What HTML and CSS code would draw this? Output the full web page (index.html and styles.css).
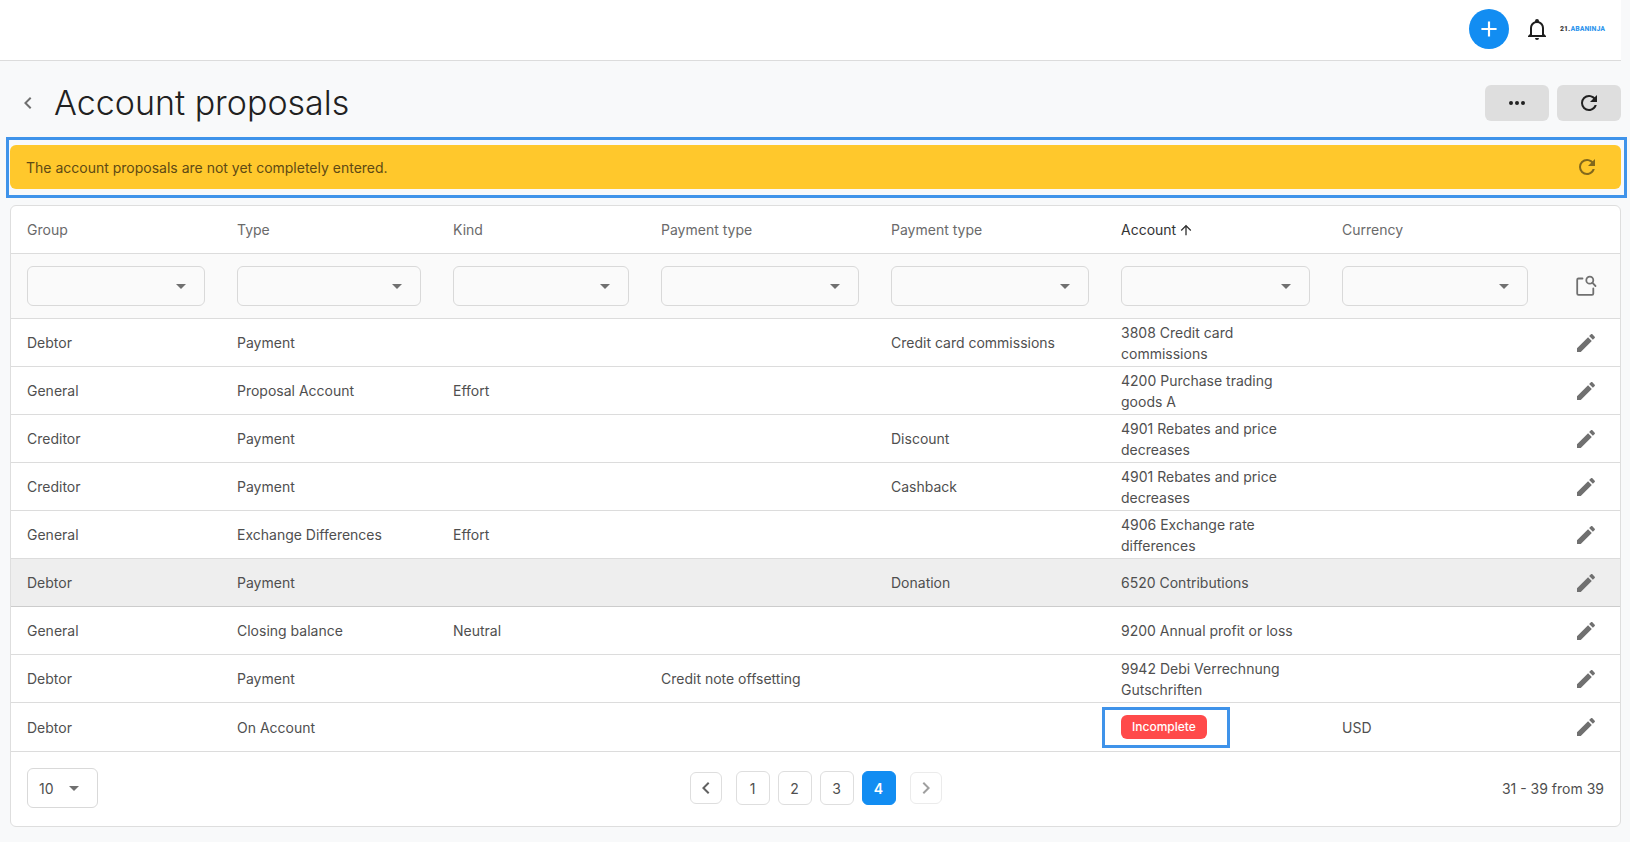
FILE: index.html
```html
<!DOCTYPE html>
<html lang="en">
<head>
<meta charset="utf-8">
<title>Account proposals</title>
<link rel="stylesheet" href="styles.css">
</head>
<body>
<svg class="sprite" aria-hidden="true">
  <symbol id="pencil" viewBox="0 0 24 24"><path d="M20.71,7.04C21.1,6.65 21.1,6 20.71,5.63L18.37,3.29C18,2.9 17.35,2.9 16.96,3.29L15.12,5.12L18.87,8.87M3,17.25V21H6.75L17.81,9.93L14.06,6.18L3,17.25Z"/></symbol>
  <symbol id="refresh" viewBox="0 0 24 24"><path d="M17.65,6.35C16.2,4.9 14.21,4 12,4A8,8 0 0,0 4,12A8,8 0 0,0 12,20C15.73,20 18.84,17.45 19.73,14H17.65C16.83,16.33 14.61,18 12,18A6,6 0 0,1 6,12A6,6 0 0,1 12,6C13.66,6 15.14,6.69 16.22,7.78L13,11H20V4L17.65,6.35Z"/></symbol>
  <symbol id="chevron-left" viewBox="0 0 24 24"><path d="M15.41,16.58L10.83,12L15.41,7.41L14,6L8,12L14,18L15.41,16.58Z"/></symbol>
  <symbol id="chevron-right" viewBox="0 0 24 24"><path d="M8.59,16.58L13.17,12L8.59,7.41L10,6L16,12L10,18L8.59,16.58Z"/></symbol>
</svg>

<header class="topbar">
  <button class="add" type="button" aria-label="Add"><svg viewBox="0 0 24 24"><path d="M19,13H13V19H11V13H5V11H11V5H13V11H19V13Z"/></svg></button>
  <button class="bell" type="button" aria-label="Notifications"><svg viewBox="0 0 24 24"><path d="M10,21H14A2,2 0 0,1 12,23A2,2 0 0,1 10,21M21,19V20H3V19L5,17V11C5,7.9 7.03,5.17 10,4.29C10,4.19 10,4.1 10,4A2,2 0 0,1 12,2A2,2 0 0,1 14,4C14,4.1 14,4.19 14,4.29C16.97,5.17 19,7.9 19,11V17L21,19M17,11A5,5 0 0,0 12,6A5,5 0 0,0 7,11V18H17V11Z"/></svg></button>
  <a class="logo" href="#"><span class="logo-mark">21.</span>ABANINJA</a>
</header>

<main class="page">
  <div class="title-row">
    <button class="back" type="button" aria-label="Back"><svg class="icon"><use href="#chevron-left"/></svg></button>
    <h1>Account proposals</h1>
    <button class="action" type="button" aria-label="More"><svg class="icon" viewBox="0 0 24 24"><path d="M16,12A2,2 0 0,1 18,10A2,2 0 0,1 20,12A2,2 0 0,1 18,14A2,2 0 0,1 16,12M10,12A2,2 0 0,1 12,10A2,2 0 0,1 14,12A2,2 0 0,1 12,14A2,2 0 0,1 10,12M4,12A2,2 0 0,1 6,10A2,2 0 0,1 8,12A2,2 0 0,1 6,14A2,2 0 0,1 4,12Z"/></svg></button>
    <button class="action" type="button" aria-label="Refresh"><svg class="icon"><use href="#refresh"/></svg></button>
  </div>

  <div class="banner">
    <span>The account proposals are not yet completely entered.</span>
    <button class="banner-refresh" type="button" aria-label="Refresh"><svg class="icon"><use href="#refresh"/></svg></button>
  </div>

  <section class="card">
    <table>
      <colgroup><col class="c-group"><col class="c-type"><col class="c-kind"><col class="c-pay"><col class="c-pay"><col class="c-account"><col class="c-currency"><col class="c-edit"></colgroup>
      <thead>
        <tr class="heads">
          <th scope="col">Group</th><th scope="col">Type</th><th scope="col">Kind</th><th scope="col">Payment type</th><th scope="col">Payment type</th>
          <th scope="col" class="sorted" aria-sort="ascending"><span class="sort">Account<svg viewBox="0 0 24 24"><path d="M13,20H11V8L5.5,13.5L4.08,12.08L12,4.16L19.92,12.08L18.5,13.5L13,8V20Z"/></svg></span></th>
          <th scope="col">Currency</th><td></td>
        </tr>
        <tr class="filters">
          <td><div class="select"><select aria-label="Group"><option></option></select></div></td>
          <td><div class="select"><select aria-label="Type"><option></option></select></div></td>
          <td><div class="select"><select aria-label="Kind"><option></option></select></div></td>
          <td><div class="select"><select aria-label="Payment type"><option></option></select></div></td>
          <td><div class="select"><select aria-label="Payment type"><option></option></select></div></td>
          <td><div class="select"><select aria-label="Account"><option></option></select></div></td>
          <td><div class="select"><select aria-label="Currency"><option></option></select></div></td>
          <td class="tools"><button type="button" aria-label="Search"><svg viewBox="0 0 24 24" class="outline"><path d="M8.500 4.500H4.500A1.300 1.300 0 0 0 3.200 5.800V19.500A1.300 1.300 0 0 0 4.500 20.800H18A1.300 1.300 0 0 0 19.300 19.500V14.500"/><circle cx="15.800" cy="6.200" r="3.500"/><path d="M18.300 8.700L21.500 12"/></svg></button></td>
        </tr>
      </thead>
      <tbody>
        <tr><td>Debtor</td><td>Payment</td><td></td><td></td><td>Credit card commissions</td><td>3808 Credit card commissions</td><td></td><td class="tools"><button type="button" aria-label="Edit"><svg><use href="#pencil"/></svg></button></td></tr>
        <tr><td>General</td><td>Proposal Account</td><td>Effort</td><td></td><td></td><td>4200 Purchase trading goods A</td><td></td><td class="tools"><button type="button" aria-label="Edit"><svg><use href="#pencil"/></svg></button></td></tr>
        <tr><td>Creditor</td><td>Payment</td><td></td><td></td><td>Discount</td><td>4901 Rebates and price decreases</td><td></td><td class="tools"><button type="button" aria-label="Edit"><svg><use href="#pencil"/></svg></button></td></tr>
        <tr><td>Creditor</td><td>Payment</td><td></td><td></td><td>Cashback</td><td>4901 Rebates and price decreases</td><td></td><td class="tools"><button type="button" aria-label="Edit"><svg><use href="#pencil"/></svg></button></td></tr>
        <tr><td>General</td><td>Exchange Differences</td><td>Effort</td><td></td><td></td><td>4906 Exchange rate differences</td><td></td><td class="tools"><button type="button" aria-label="Edit"><svg><use href="#pencil"/></svg></button></td></tr>
        <tr class="active"><td>Debtor</td><td>Payment</td><td></td><td></td><td>Donation</td><td>6520 Contributions</td><td></td><td class="tools"><button type="button" aria-label="Edit"><svg><use href="#pencil"/></svg></button></td></tr>
        <tr><td>General</td><td>Closing balance</td><td>Neutral</td><td></td><td></td><td>9200 Annual profit or loss</td><td></td><td class="tools"><button type="button" aria-label="Edit"><svg><use href="#pencil"/></svg></button></td></tr>
        <tr><td>Debtor</td><td>Payment</td><td></td><td>Credit note offsetting</td><td></td><td>9942 Debi Verrechnung Gutschriften</td><td></td><td class="tools"><button type="button" aria-label="Edit"><svg><use href="#pencil"/></svg></button></td></tr>
        <tr class="last"><td>Debtor</td><td>On Account</td><td></td><td></td><td></td><td><span class="badge">Incomplete</span></td><td>USD</td><td class="tools"><button type="button" aria-label="Edit"><svg><use href="#pencil"/></svg></button></td></tr>
      </tbody>
    </table>
    <footer class="foot">
      <div class="select page-size"><select aria-label="Rows per page"><option>10</option></select></div>
      <nav class="pager" aria-label="Pages">
        <button class="step" type="button" aria-label="Previous page"><svg class="icon"><use href="#chevron-left"/></svg></button>
        <div class="numbers">
          <button type="button">1</button><button type="button">2</button><button type="button">3</button><button class="current" type="button" aria-current="page">4</button>
        </div>
        <button class="step" type="button" aria-label="Next page" disabled><svg class="icon"><use href="#chevron-right"/></svg></button>
      </nav>
      <span class="range">31 - 39 from 39</span>
    </footer>
  </section>
</main>
</body>
</html>
```
FILE: styles.css
```css
* { box-sizing: border-box; }

body {
  margin: 0;
  background: #f8f9fa;
  color: #4f4f4f;
  font: 400 14px/21px Inter, "Liberation Sans", sans-serif;
}

button, select { font: inherit; color: inherit; margin: 0; padding: 0; }

button {
  display: flex;
  align-items: center;
  justify-content: center;
  border: 0;
  background: none;
  cursor: pointer;
}

svg { display: block; fill: currentColor; }
.sprite { position: absolute; width: 0; height: 0; }
.icon { width: 24px; height: 24px; }

/* Top bar */
.topbar {
  display: flex;
  align-items: center;
  justify-content: flex-end;
  gap: 16px;
  margin-right: 9px;
  padding: 9px 16px 11px;
  background: #fff;
  border-bottom: 1px solid #dcdcdc;
}
.add { width: 40px; height: 40px; border-radius: 50%; background: #128df2; color: #fff; }
.add svg { width: 26px; height: 26px; }
.bell { width: 24px; height: 24px; color: #1e1e1e; }
.bell svg { width: 24px; height: 24px; }
.logo {
  color: #2f96ee;
  font: 700 8px/12px "Liberation Sans Narrow", "Roboto Condensed", "Open Sans Condensed", Roboto, sans-serif;
  text-decoration: none;
  display: flex;
  justify-content: flex-end;
  width: 40px;
}
.logo-mark { color: #333; }

/* Page */
.page { padding: 0 9px 14px 10px; }

.title-row { display: flex; align-items: center; gap: 8px; padding: 24px 0; }
h1 { flex: 1; margin: 0; color: #212121; font-size: 34px; line-height: 36px; font-weight: 300; }
.back { width: 36px; height: 36px; color: #707070; }
.action { width: 64px; height: 36px; border-radius: 6px; background: #dedede; color: #212121; }

.banner {
  position: relative;
  display: flex;
  align-items: center;
  justify-content: space-between;
  margin-bottom: 16px;
  padding: 10px 22px 10px 16px;
  border-radius: 6px;
  background: #ffc82c;
  color: #5e4a14;
}
.banner-refresh { color: #82681c; }
.banner::after {
  content: "";
  position: absolute;
  inset: -8px -6px -9px -4px;
  border: 3px solid #3f93ea;
  pointer-events: none;
}

/* Table card */
.card { background: #fff; border: 1px solid #dedede; border-radius: 6px; overflow: hidden; }

table { width: 100%; table-layout: fixed; border-collapse: separate; border-spacing: 0; }
.c-group { width: 210px; }
.c-type { width: 216px; }
.c-kind { width: 208px; }
.c-pay { width: 230px; }
.c-account { width: 221px; }
.c-currency { width: 218px; }
.c-edit { width: 76px; }

th, td {
  height: 48px;
  padding: 2px 16px;
  border-bottom: 1px solid #dcdcdc;
  text-align: left;
  vertical-align: middle;
  font-weight: 400;
}
th { color: #6a6a6a; }
.sorted { color: #333; }
.sort { display: flex; align-items: center; gap: 2px; }
.sort svg { width: 16px; height: 16px; }

.filters td { height: 65px; background: #fafafa; }
.select { position: relative; }
.select::after {
  content: "";
  position: absolute;
  top: 18px;
  right: 19px;
  border: 5px solid transparent;
  border-top-color: #707070;
  border-bottom-width: 0;
  pointer-events: none;
}
.select select {
  display: block;
  width: 100%;
  height: 40px;
  padding: 0 11px;
  border: 1px solid #d9d9d9;
  border-radius: 6px;
  background: transparent;
  appearance: none;
}

.active td { background: #eee; border-bottom-color: #ccc; }
.last td { height: 49px; }

.tools { padding: 0 22px 0 30px; color: #707070; }
.tools button, .tools svg { width: 24px; height: 24px; }
.outline { fill: none; stroke: currentColor; stroke-width: 1.8; stroke-linecap: round; }

.badge {
  position: relative;
  display: inline-block;
  padding: 0 11px;
  border-radius: 6px;
  background: #ff4a4a;
  color: #fff;
  font-size: 12px;
  line-height: 24px;
  font-weight: 500;
}
.badge::after {
  content: "";
  position: absolute;
  inset: -8px -23px -9px -19px;
  border: 3px solid #3f93ea;
  pointer-events: none;
}

/* Footer */
.foot {
  display: grid;
  grid-template-columns: 1fr auto 1fr;
  align-items: center;
  padding: 16px 16px 18px;
}
.page-size { width: 71px; }
.pager, .numbers { display: flex; align-items: center; }
.pager { gap: 14px; }
.numbers { gap: 8px; }
.numbers button, .step { border: 1px solid #dedede; border-radius: 6px; }
.numbers button { width: 34px; height: 34px; }
.numbers .current { background: #128df2; border-color: #128df2; color: #fff; font-weight: 600; }
.step { width: 32px; height: 32px; color: #616161; }
.step:disabled { opacity: .6; }
.range { justify-self: end; }
```
